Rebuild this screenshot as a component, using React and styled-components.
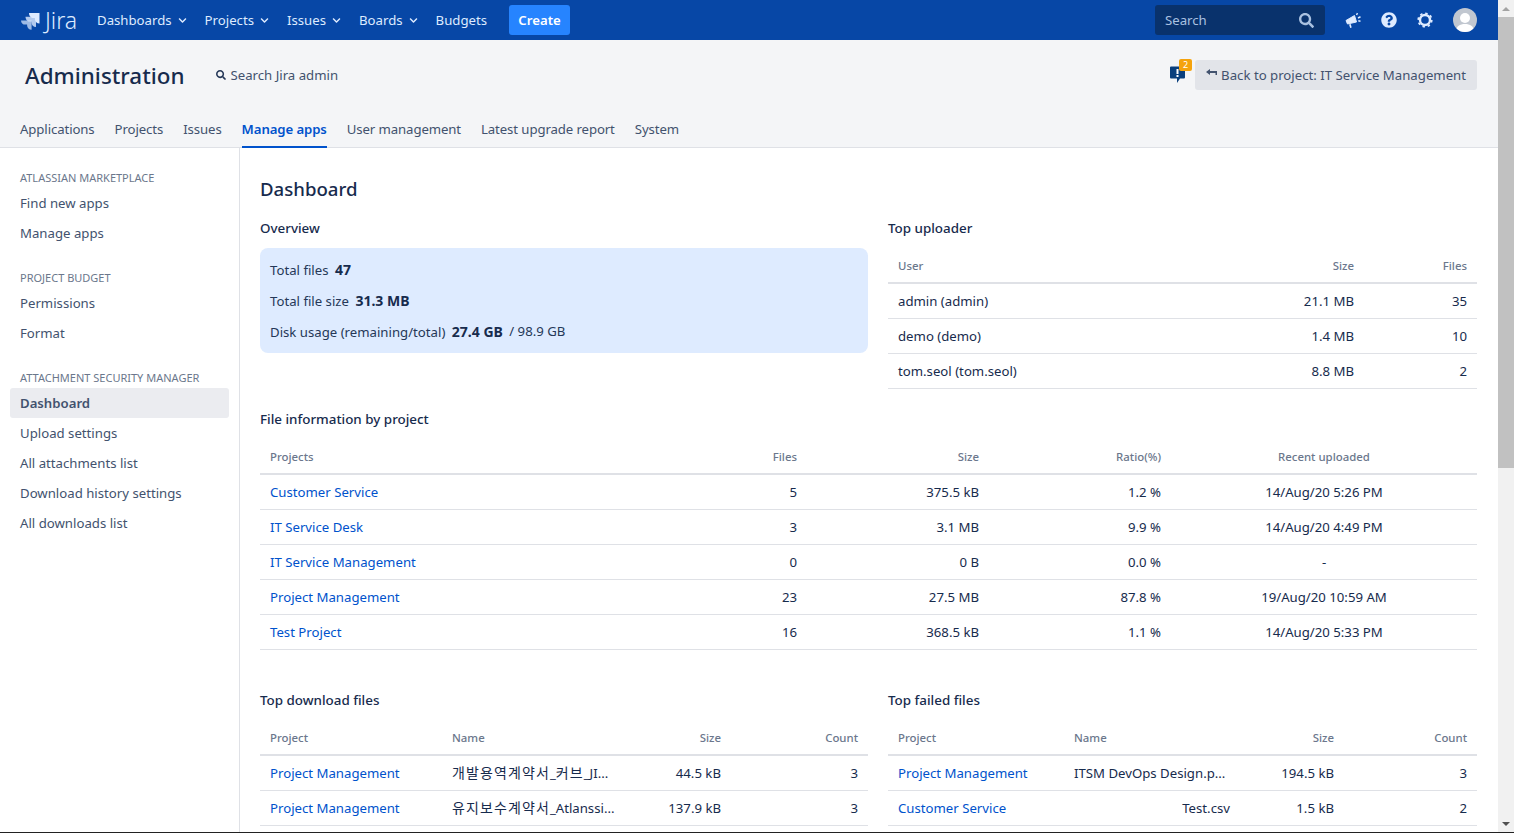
import React from "react";
import styled, { createGlobalStyle } from "styled-components";
import { FaQuestionCircle, FaSearch, FaChevronDown } from "react-icons/fa";

const navItems = [
	{ label: "Dashboards", caret: true },
	{ label: "Projects", caret: true },
	{ label: "Issues", caret: true },
	{ label: "Boards", caret: true },
	{ label: "Budgets" },
];
const adminTabs = ["Applications", "Projects", "Issues", "Manage apps", "User management", "Latest upgrade report", "System"];
const sideGroups = [
	{ title: "ATLASSIAN MARKETPLACE", links: ["Find new apps", "Manage apps"] },
	{ title: "PROJECT BUDGET", links: ["Permissions", "Format"] },
	{
		title: "ATTACHMENT SECURITY MANAGER",
		links: ["Dashboard", "Upload settings", "All attachments list", "Download history settings", "All downloads list"],
	},
];
const uploaders = [
	["admin (admin)", "21.1 MB", "35"],
	["demo (demo)", "1.4 MB", "10"],
	["tom.seol (tom.seol)", "8.8 MB", "2"],
];
const projects = [
	["Customer Service", "5", "375.5 kB", "1.2 %", "14/Aug/20 5:26 PM"],
	["IT Service Desk", "3", "3.1 MB", "9.9 %", "14/Aug/20 4:49 PM"],
	["IT Service Management", "0", "0 B", "0.0 %", "-"],
	["Project Management", "23", "27.5 MB", "87.8 %", "19/Aug/20 10:59 AM"],
	["Test Project", "16", "368.5 kB", "1.1 %", "14/Aug/20 5:33 PM"],
];
const downloads = [
	["Project Management", "개발용역계약서_커브_JI...", "44.5 kB", "3"],
	["Project Management", "유지보수계약서_Atlanssi...", "137.9 kB", "3"],
];
const failed = [
	["Project Management", "ITSM DevOps Design.p...", "194.5 kB", "3"],
	["Customer Service", "Test.csv", "1.5 kB", "2"],
];

const JiraMark = () => (
	<svg width="22" height="20" viewBox="0 0 22 20" fill="#deebff">
		<path d="M9 3h10.500v10.500c-2.600 0-4.600-2-4.600-4.600V8H13c-2.200 0-4-2.200-4-5z" />
		<path d="M5.500 6.700H16v10.300c-2.600 0-4.500-2-4.500-4.500v-.9H9.600c-2.200 0-4.100-2.300-4.100-4.900z" opacity=".8" />
		<path d="M1 10.400h10.600v9.300c-2.600 0-4.500-1.900-4.500-4.500v-.6H5.200c-2.300 0-4.200-1.800-4.200-4.200z" opacity=".7" />
	</svg>
);

const Megaphone = () => (
	<svg width="17" height="17" viewBox="0 0 17 17" fill="#deebff" stroke="#deebff">
		<path d="M1 8.500 9.500 3.500 11.500 10 2.500 12z" strokeLinejoin="round" />
		<path d="M4 12.500 5.200 16 6.700 15.500 5.700 12z" stroke="none" />
		<path d="M11.500 3 12.500 1.200M13 6 15.500 4.800M13.300 8.800 15.500 9.300" strokeWidth="1.500" />
	</svg>
);

const Gear = () => (
	<svg width="16" height="16" viewBox="0 0 16 16" fill="none" stroke="#deebff">
		<circle cx="8" cy="8" r="5" strokeWidth="2.400" />
		<circle cx="8" cy="8" r="6.800" strokeWidth="1.600" strokeDasharray="2.500 2.840" />
	</svg>
);

const BackArrow = () => (
	<ArrowSvg width="11" height="8" viewBox="0 0 11 8" fill="#42526e">
		<path d="M0 3 4 0v2h7v4H9.500V4H4v2z" />
	</ArrowSvg>
);

const PersonFace = () => (
	<svg width="24" height="24" viewBox="0 0 24 24" fill="#fff">
		<circle cx="12" cy="10" r="5" />
		<path d="M3 24c0-6 4-8 9-8s9 2 9 8z" />
	</svg>
);

// hangul runs are spaced wider than the latin part of a name
const splitName = (name) =>
	name.split(/([가-힣]+)/).map((part, i) => (/[가-힣]/.test(part) ? <Hangul key={i}>{part}</Hangul> : part));

const DataTable = ({ columns, rows, linkFirst, nameCol }) => (
	<Table>
		<colgroup>
			{columns.map((c) => (
				<col key={c.label} style={{ width: c.width }} />
			))}
		</colgroup>
		<thead>
			<tr>
				{columns.map((c) => (
					<Th key={c.label} $align={c.align}>
						{c.label}
					</Th>
				))}
			</tr>
		</thead>
		<tbody>
			{rows.map((row) => (
				<tr key={row.join("-")}>
					{row.map((cell, i) => (
						<Td key={i} $align={columns[i].align}>
							{linkFirst && i === 0 ? (
								<TableLink>{cell}</TableLink>
							) : i === nameCol ? (
								<FileName $short={!cell.endsWith("...")}>{splitName(cell)}</FileName>
							) : (
								cell
							)}
						</Td>
					))}
				</tr>
			))}
		</tbody>
	</Table>
);

const App = () => (
	<Shell>
		<GlobalStyle />
		<Page>
			<TopBar>
				<Logo>
					<JiraMark />
					<LogoText>Jira</LogoText>
				</Logo>
				{navItems.map((item) => (
					<NavItem key={item.label}>
						{item.label}
						{item.caret && <FaChevronDown size={9} />}
					</NavItem>
				))}
				<CreateButton>Create</CreateButton>
				<TopRight>
					<SearchBox>
						<span>Search</span>
						<FaSearch size={15} color="#a9c1e0" />
					</SearchBox>
					<TopIcon>
						<Megaphone />
					</TopIcon>
					<TopIcon>
						<FaQuestionCircle size={16} />
					</TopIcon>
					<TopIcon>
						<Gear />
					</TopIcon>
					<Avatar>
						<PersonFace />
					</Avatar>
				</TopRight>
			</TopBar>
			<AdminHeader>
				<AdminTop>
					<AdminTitle>Administration</AdminTitle>
					<AdminSearch>
						<FaSearch size={10} color="#253858" />
						Search Jira admin
					</AdminSearch>
					<AdminActions>
						<Notice>
							<svg width="17" height="18" viewBox="0 0 17 18">
								<path d="M1 1.500a1 1 0 0 1 1-1h13a1 1 0 0 1 1 1v10a1 1 0 0 1-1 1h-4L8 17v-4.500H2a1 1 0 0 1-1-1z" fill="#0a3f7d" />
								<rect x="7.500" y="3" width="2" height="5" fill="#fff" />
								<rect x="7.500" y="9" width="2" height="2" fill="#fff" />
							</svg>
							<NoticeBadge>2</NoticeBadge>
						</Notice>
						<BackButton>
							<BackArrow />
							Back to project: IT Service Management
						</BackButton>
					</AdminActions>
				</AdminTop>
				<Tabs>
					{adminTabs.map((t) => (
						<Tab key={t} $active={t === "Manage apps"}>
							{t}
						</Tab>
					))}
				</Tabs>
			</AdminHeader>
			<Body>
				<Sidebar>
					{sideGroups.map((g) => (
						<SideGroup key={g.title}>
							<SideTitle>{g.title}</SideTitle>
							{g.links.map((l) => (
								<SideLink key={l} $active={l === "Dashboard"}>
									{l}
								</SideLink>
							))}
						</SideGroup>
					))}
				</Sidebar>
				<Main>
					<PageTitle>Dashboard</PageTitle>
					<TwoCols>
						<div>
							<SectionTitle>Overview</SectionTitle>
							<OverviewBox>
								<OverviewRow>
									Total files <strong>47</strong>
								</OverviewRow>
								<OverviewRow>
									Total file size <strong>31.3 MB</strong>
								</OverviewRow>
								<OverviewRow>
									Disk usage (remaining/total) <strong>27.4 GB</strong> <span>/ 98.9 GB</span>
								</OverviewRow>
							</OverviewBox>
						</div>
						<div>
							<SectionTitle>Top uploader</SectionTitle>
							<DataTable
								columns={[
									{ label: "User", width: 376 },
									{ label: "Size", width: 100, align: "right" },
									{ label: "Files", width: 113, align: "right" },
								]}
								rows={uploaders}
							/>
						</div>
					</TwoCols>
					<Section>
						<SectionTitle>File information by project</SectionTitle>
						<DataTable
							linkFirst
							columns={[
								{ label: "Projects", width: 365 },
								{ label: "Files", width: 182, align: "right" },
								{ label: "Size", width: 182, align: "right" },
								{ label: "Ratio(%)", width: 182, align: "right" },
								{ label: "Recent uploaded", width: 306, align: "center" },
							]}
							rows={projects}
						/>
					</Section>
					<BottomCols>
						<div>
							<SectionTitle>Top download files</SectionTitle>
							<DataTable
								linkFirst
								nameCol={1}
								columns={[
									{ label: "Project", width: 182 },
									{ label: "Name", width: 180 },
									{ label: "Size", width: 109, align: "right" },
									{ label: "Count", width: 137, align: "right" },
								]}
								rows={downloads}
							/>
						</div>
						<div>
							<SectionTitle>Top failed files</SectionTitle>
							<DataTable
								linkFirst
								nameCol={1}
								columns={[
									{ label: "Project", width: 176 },
									{ label: "Name", width: 176 },
									{ label: "Size", width: 104, align: "right" },
									{ label: "Count", width: 133, align: "right" },
								]}
								rows={failed}
							/>
						</div>
					</BottomCols>
				</Main>
			</Body>
		</Page>
		<ScrollBar>
			<ScrollArrow />
			<ScrollThumb />
			<ScrollTrackRest />
			<ScrollArrow $down />
		</ScrollBar>
	</Shell>
);

export default App;

const GlobalStyle = createGlobalStyle`
	html, body {
		margin: 0;
		padding: 0;
		height: 100%;
		overflow: hidden;
		background: #fff;
	}
	body {
		font-family: "Noto Sans", "Noto Sans CJK KR", sans-serif;
		font-size: 13.2px;
		color: #172b4d;
	}
`;

const Shell = styled.div`
	display: flex;
	width: 1514px;
	height: 832px;
	border-bottom: 1px solid #222;
	overflow: hidden;
`;
const Page = styled.div`
	width: 1498px;
	flex-shrink: 0;
	display: flex;
	flex-direction: column;
`;
const TopBar = styled.header`
	display: flex;
	align-items: center;
	height: 40px;
	flex-shrink: 0;
	padding: 0 20px;
	background: #0747a6;
	color: #deebff;
`;
const Logo = styled.div`
	display: flex;
	align-items: center;
	gap: 3px;
	width: 68px;
`;
const LogoText = styled.span`
	font-size: 23px;
	font-weight: 300;
	line-height: 1;
	color: #deebff;
`;
const NavItem = styled.div`
	display: flex;
	align-items: center;
	gap: 6px;
	padding: 0 9px;
	height: 30px;
	white-space: nowrap;
`;
const CreateButton = styled.button`
	height: 30px;
	width: 61px;
	margin-left: 13px;
	padding: 0;
	border: 0;
	border-radius: 3px;
	background: #2684ff;
	color: #fff;
	font: 600 13.2px "Noto Sans", sans-serif;
`;
const TopRight = styled.div`
	display: flex;
	align-items: center;
	margin-left: auto;
	margin-right: 1px;
`;
const SearchBox = styled.div`
	display: flex;
	align-items: center;
	justify-content: space-between;
	box-sizing: border-box;
	width: 170px;
	height: 30px;
	padding: 0 11px 0 10px;
	margin-right: 10px;
	border-radius: 3px;
	background: #09326c;
	color: #a9c1e0;
`;
const TopIcon = styled.div`
	display: flex;
	justify-content: center;
	width: 36px;
	color: #deebff;
`;
const Avatar = styled.div`
	display: flex;
	width: 24px;
	height: 24px;
	margin-left: 10px;
	border-radius: 50%;
	overflow: hidden;
	background: #c1c7d0;
`;
const AdminHeader = styled.div`
	box-sizing: border-box;
	height: 108px;
	flex-shrink: 0;
	padding: 20px 21px 0 20px;
	display: flex;
	flex-direction: column;
	background: #f4f5f7;
	border-bottom: 1px solid #dfe1e6;
`;
const AdminTop = styled.div`
	display: flex;
	align-items: center;
	height: 30px;
`;
const AdminTitle = styled.h1`
	margin: 2px 31px 0 5px;
	font-size: 22.4px;
	font-weight: 500;
	line-height: 30px;
`;
const AdminSearch = styled.div`
	display: flex;
	align-items: center;
	gap: 5px;
	color: #42526e;
`;
const AdminActions = styled.div`
	display: flex;
	align-items: center;
	gap: 9px;
	margin-left: auto;
`;
const Notice = styled.div`
	position: relative;
	display: flex;
	width: 17px;
	height: 18px;
`;
const NoticeBadge = styled.span`
	position: absolute;
	top: -7px;
	right: -6px;
	width: 13px;
	height: 12px;
	border-radius: 2px;
	background: #f5a30d;
	color: #fff;
	font-size: 9px;
	line-height: 12px;
	text-align: center;
`;
const BackButton = styled.button`
	display: flex;
	align-items: center;
	gap: 4px;
	height: 30px;
	padding: 0 11px;
	border: 0;
	border-radius: 3px;
	background: #e2e4e9;
	color: #42526e;
	font: 13.2px "Noto Sans", sans-serif;
`;
const ArrowSvg = styled.svg`
	margin-bottom: 4px;
`;
const Tabs = styled.nav`
	display: flex;
	gap: 20px;
	margin-top: auto;
	letter-spacing: -0.1px;
`;
const Tab = styled.div`
	height: 37px;
	margin-bottom: -1px;
	box-sizing: border-box;
	padding-top: 9px;
	line-height: 19px;
	font-weight: ${({ $active }) => ($active ? 600 : 400)};
	color: ${({ $active }) => ($active ? "#0052cc" : "#42526e")};
	border-bottom: 2px solid ${({ $active }) => ($active ? "#0052cc" : "transparent")};
`;
const Body = styled.div`
	display: flex;
	flex: 1;
	min-height: 0;
`;
const Sidebar = styled.aside`
	box-sizing: border-box;
	width: 240px;
	flex-shrink: 0;
	padding: 20px 10px;
	border-right: 1px solid #dfe1e6;
`;
const SideGroup = styled.div`
	margin-bottom: 20px;
`;
const SideTitle = styled.div`
	height: 20px;
	padding-left: 10px;
	color: #6b778c;
	font-size: 11px;
	line-height: 20px;
`;
const SideLink = styled.div`
	height: 30px;
	padding-left: 10px;
	border-radius: 3px;
	line-height: 30px;
	color: #42526e;
	font-weight: ${({ $active }) => ($active ? 600 : 400)};
	background: ${({ $active }) => ($active ? "#ebecf0" : "transparent")};
`;
const Main = styled.main`
	flex: 1;
	min-width: 0;
	padding: 26px 21px 0 20px;
`;
const PageTitle = styled.h2`
	margin: 0 0 14px;
	font-size: 18.6px;
	font-weight: 500;
	line-height: 30px;
`;
const TwoCols = styled.div`
	display: grid;
	grid-template-columns: 608px 589px;
	gap: 20px;
`;
const BottomCols = styled(TwoCols)`
	margin-top: 40px;
`;
const Section = styled.section`
	margin-top: 20px;
`;
const SectionTitle = styled.h3`
	margin: 0 0 10px;
	font-size: 13.4px;
	font-weight: 500;
	line-height: 20px;
	color: #172b4d;
`;
const OverviewBox = styled.div`
	box-sizing: border-box;
	height: 105px;
	padding: 6px 10px;
	border-radius: 8px;
	background: #deebff;
`;
const OverviewRow = styled.div`
	height: 31px;
	line-height: 31px;
	color: #253858;
	strong {
		margin-left: 3px;
		font-size: 14px;
		font-weight: 700;
		color: #172b4d;
	}
	span {
		margin-left: 3px;
		position: relative;
		top: -1px;
	}
`;
const Table = styled.table`
	width: 100%;
	table-layout: fixed;
	border-collapse: collapse;
`;
const Th = styled.th`
	height: 34px;
	padding: 0 10px;
	border-bottom: 2px solid #dfe1e6;
	color: #6b778c;
	font-size: 11.4px;
	font-weight: 500;
	text-align: ${({ $align }) => $align || "left"};
`;
const Td = styled.td`
	height: 34px;
	padding: 0 10px;
	border-bottom: 1px solid #dfe1e6;
	color: #172b4d;
	line-height: 19px;
	white-space: nowrap;
	text-align: ${({ $align }) => $align || "left"};
`;
const TableLink = styled.a`
	color: #0052cc;
`;
const FileName = styled.div`
	width: 156px;
	text-align: ${({ $short }) => ($short ? "right" : "left")};
`;
const Hangul = styled.span`
	font-size: 14px;
	letter-spacing: 1.1px;
`;
const ScrollBar = styled.div`
	width: 16px;
	flex-shrink: 0;
	display: flex;
	flex-direction: column;
	background: #f1f1f1;
`;
const ScrollArrow = styled.div`
	height: 17px;
	flex-shrink: 0;
	display: flex;
	align-items: center;
	justify-content: center;
	&::before {
		content: "";
		border-left: 4px solid transparent;
		border-right: 4px solid transparent;
		${({ $down }) => ($down ? "border-top: 4px solid #505050;" : "border-bottom: 4px solid #a3a3a3;")}
	}
`;
const ScrollThumb = styled.div`
	height: 451px;
	background: #c1c1c1;
`;
const ScrollTrackRest = styled.div`
	flex: 1;
`;
